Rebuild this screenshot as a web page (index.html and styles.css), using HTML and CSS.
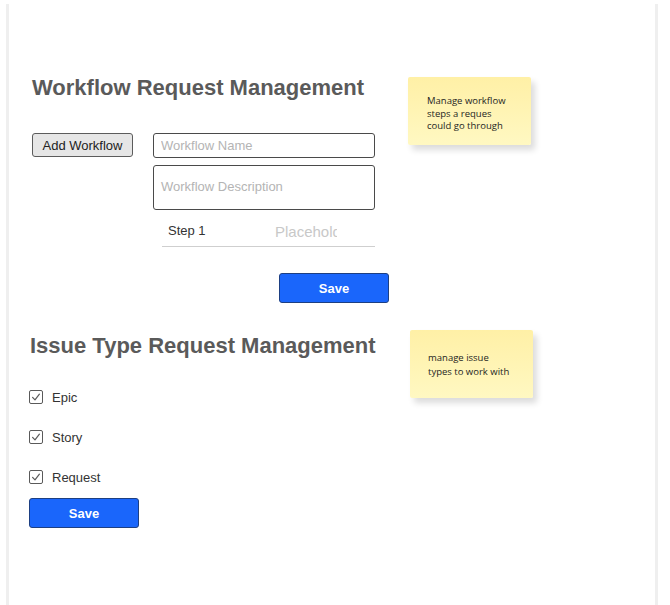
FILE: index.html
```html
<!DOCTYPE html>
<html>
<head>
<meta charset="utf-8">
<link rel="stylesheet" href="styles.css">
</head>
<body>
<div class="frame">
  <section class="sec sec-workflow">
    <div class="main main-workflow">
      <h1 class="title">Workflow Request Management</h1>
      <div class="form-row">
        <button class="btn-secondary">Add Workflow</button>
        <div class="fields">
          <input class="field field-name" type="text" placeholder="Workflow Name">
          <textarea class="field field-desc" placeholder="Workflow Description"></textarea>
          <div class="step-row">
            <span class="step-label">Step 1</span>
            <input class="step-input" type="text" placeholder="Placeholder">
          </div>
        </div>
      </div>
      <button class="btn-primary btn-save1">Save</button>
    </div>
    <div class="note note-1">Manage workflow<br>steps a reques<br>could go through</div>
  </section>

  <section class="sec sec-issue">
    <div class="main main-issue">
      <h1 class="title title-issue">Issue Type Request Management</h1>
      <ul class="checks">
        <li class="check-row"><span class="box"><svg viewBox="0 0 14 14" width="14" height="14"><polyline points="3.6,7.4 6,9.9 10.4,4.2" fill="none" stroke="#5a5a5a" stroke-width="1.2" stroke-linecap="round" stroke-linejoin="round"/></svg></span><span class="check-label">Epic</span></li>
        <li class="check-row"><span class="box"><svg viewBox="0 0 14 14" width="14" height="14"><polyline points="3.6,7.4 6,9.9 10.4,4.2" fill="none" stroke="#5a5a5a" stroke-width="1.2" stroke-linecap="round" stroke-linejoin="round"/></svg></span><span class="check-label">Story</span></li>
        <li class="check-row"><span class="box"><svg viewBox="0 0 14 14" width="14" height="14"><polyline points="3.6,7.4 6,9.9 10.4,4.2" fill="none" stroke="#5a5a5a" stroke-width="1.2" stroke-linecap="round" stroke-linejoin="round"/></svg></span><span class="check-label">Request</span></li>
      </ul>
      <button class="btn-primary btn-save2">Save</button>
    </div>
    <div class="note note-2">manage issue<br>types to work with</div>
  </section>
</div>
</body>
</html>
```

FILE: styles.css
```css
* { box-sizing: border-box; }
html, body { margin: 0; padding: 0; background: #ffffff; }
body {
  font-family: "Liberation Sans", Arial, sans-serif;
  color: #333;
  width: 670px;
  height: 605px;
  overflow: hidden;
}
.frame {
  margin: 4px 0 0 6px;
  width: 652px;
  height: 601px;
  border-left: 3px solid #efefef;
  border-right: 3px solid #efefef;
  background: #fff;
}
.sec {
  display: flex;
  align-items: flex-start;
}
.sec-workflow { padding-top: 71px; }
.sec-issue { margin-top: 27px; }

.main-workflow {
  margin-left: 23px;
  width: 357px;
  display: flex;
  flex-direction: column;
  align-items: flex-start;
}
.main-issue {
  margin-left: 20px;
  width: 350px;
  display: flex;
  flex-direction: column;
  align-items: flex-start;
  padding-top: 3px;
}

.title {
  margin: 0;
  font-size: 22px;
  line-height: 26px;
  font-weight: bold;
  color: #5a5a5a;
  white-space: nowrap;
}
.title-issue { margin-left: 1px; }

.form-row {
  display: flex;
  align-items: flex-start;
  gap: 20px;
  margin-top: 32px;
}
.btn-secondary {
  width: 101px;
  height: 24px;
  padding: 0;
  font-family: "Liberation Sans", Arial, sans-serif;
  font-size: 13px;
  color: #222;
  background: #e6e6e6;
  border: 1px solid #5c5c5c;
  border-radius: 3px;
}
.fields {
  width: 222px;
  display: flex;
  flex-direction: column;
}
.field {
  width: 222px;
  border: 1px solid #4a4a4a;
  border-radius: 3px;
  font-family: "Liberation Sans", Arial, sans-serif;
  font-size: 13px;
  color: #333;
  padding: 0 7px;
  outline: none;
  background: #fff;
}
.field::placeholder { color: #b4b4b4; }
.field-name { height: 25px; }
.field-desc {
  height: 45px;
  margin-top: 7px;
  resize: none;
  padding-top: 13px;
  line-height: 16px;
  overflow: hidden;
}
.step-row {
  margin: 9px 0 0 9px;
  width: 213px;
  height: 28px;
  display: flex;
  align-items: flex-start;
  padding: 0 0 3px 6px;
  border-bottom: 1px solid #cfcfcf;
}
.step-label {
  width: 107px;
  font-size: 13px;
  line-height: 24px;
  color: #333;
}
.step-input {
  width: 62px;
  height: 24px;
  padding: 0;
  border: none;
  outline: none;
  font-family: "Liberation Sans", Arial, sans-serif;
  font-size: 15px;
  background: transparent;
}
.step-input::placeholder { color: #c8c8c8; }

.btn-primary {
  width: 110px;
  height: 30px;
  padding: 0;
  background: #1a66fb;
  border: 1px solid #1d3f82;
  border-radius: 3px;
  color: #fff;
  font-family: "Liberation Sans", Arial, sans-serif;
  font-size: 13px;
  font-weight: bold;
}
.btn-save1 { margin: 26px 0 0 247px; }
.btn-save2 { margin-top: 1px; }

.checks {
  list-style: none;
  margin: 18px 0 0 0;
  padding: 0;
}
.check-row {
  height: 40px;
  display: flex;
  align-items: center;
}
.box {
  width: 14px;
  height: 14px;
  border: 1.4px solid #5a5a5a;
  border-radius: 2px;
  display: flex;
  align-items: center;
  justify-content: center;
}
.box svg { display: block; flex: none; }
.check-label {
  margin-left: 9px;
  font-size: 13px;
  color: #333;
}

.note {
  width: 123px;
  height: 68px;
  border-radius: 2px;
  background: linear-gradient(#fff0a6, #fff8c2);
  box-shadow: 4px 5px 6px rgba(0, 0, 0, 0.14);
  font-family: "Open Sans", "Noto Sans", sans-serif;
  font-size: 9.5px;
  font-weight: 500;
  line-height: 12.7px;
  color: #1e1e1e;
}
.note-1 {
  margin: 2px 0 0 19px;
  padding: 18px 0 0 19px;
}
.note-2 {
  margin-left: 31px;
  padding: 21px 0 0 18px;
  line-height: 13.7px;
}
```
